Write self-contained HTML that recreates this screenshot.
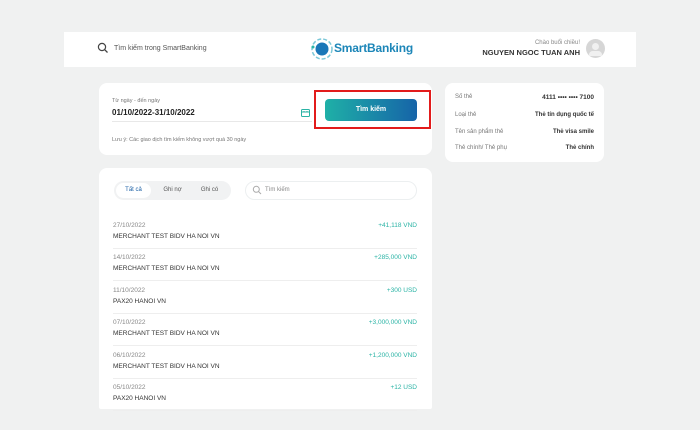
<!DOCTYPE html><html><head><meta charset="utf-8"><style>
*{margin:0;padding:0;box-sizing:border-box}
body{width:700px;height:430px;background:#f0f1f1;font-family:"Liberation Sans",sans-serif;position:relative;overflow:hidden;color:#333}
.abs{position:absolute}
.card{position:absolute;background:#fff;border-radius:8px}
.t7{font-size:7px}
</style></head><body>
<div class="abs" style="left:64px;top:32px;width:572px;height:35px;background:#fff"></div>
<svg class="abs" style="left:97px;top:42px" width="12" height="12" viewBox="0 0 12 12"><circle cx="5" cy="5" r="3.6" fill="none" stroke="#444" stroke-width="1.2"/><path d="M7.6 7.6L10.5 10.5" stroke="#444" stroke-width="1.3"/></svg>
<div class="abs t7" style="left:114px;top:45px;color:#555">Tìm kiếm trong SmartBanking</div>
<svg class="abs" style="left:310px;top:37px" width="24" height="24" viewBox="0 0 24 24"><circle cx="12" cy="12" r="10" fill="none" stroke="#7cc8d8" stroke-width="1.5" stroke-dasharray="4 2"/><circle cx="12" cy="12" r="6.5" fill="#1a77b8"/><circle cx="3" cy="10" r="1.5" fill="#2bb6a8"/></svg>
<div class="abs" style="left:334px;top:41px;font-size:12px;font-weight:bold;color:#1c86b8;letter-spacing:-0.2px">SmartBanking</div>
<div class="abs" style="left:520px;top:40px;font-size:6px;color:#888;width:60px;text-align:right">Chào buổi chiều!</div>
<div class="abs" style="left:470px;top:48px;font-size:7.5px;font-weight:bold;color:#333;width:110px;text-align:right">NGUYEN NGOC TUAN ANH</div>
<div class="abs" style="left:586px;top:39px;width:19px;height:19px;border-radius:50%;background:#d6d6d6"></div>
<div class="abs" style="left:592px;top:43px;width:7px;height:7px;border-radius:50%;background:#f0f0f0"></div>
<div class="abs" style="left:589px;top:51px;width:13px;height:5px;border-radius:6px 6px 2px 2px;background:#f0f0f0"></div>

<div class="card" style="left:99px;top:83px;width:333px;height:72px"></div>
<div class="abs" style="left:112px;top:98px;font-size:5.5px;color:#777">Từ ngày - đến ngày</div>
<div class="abs" style="left:112px;top:108px;font-size:8px;font-weight:bold;color:#222">01/10/2022-31/10/2022</div>
<div class="abs" style="left:112px;top:121px;width:200px;height:1px;background:#e8e8e8"></div>
<svg class="abs" style="left:301px;top:108px" width="9" height="9" viewBox="0 0 9 9"><rect x=".5" y="1.5" width="8" height="7" rx="1" fill="none" stroke="#2ab3a5"/><path d="M.5 4h8M3 3v1M6 3v1" stroke="#2ab3a5"/></svg>
<div class="abs" style="left:112px;top:137px;font-size:5.5px;color:#777">Lưu ý: Các giao dịch tìm kiếm không vượt quá 30 ngày</div>
<div class="abs" style="left:325px;top:99px;width:92px;height:22px;border-radius:4px;background:linear-gradient(90deg,#1fb0a7,#1664a8);color:#fff;font-size:7px;font-weight:bold;text-align:center;line-height:22px">Tìm kiếm</div>
<div class="abs" style="left:314px;top:90px;width:117px;height:39px;border:2.5px solid #e21b1b"></div>

<div class="card" style="left:445px;top:83px;width:159px;height:79px"></div>
<div class="abs" style="left:455px;top:94px;color:#777;font-size:6px">Số thẻ</div>
<div class="abs" style="left:500px;top:94px;width:94px;text-align:right;font-size:6.5px;font-weight:bold">4111 •••• •••• 7100</div>
<div class="abs" style="left:455px;top:112px;color:#777;font-size:6px">Loại thẻ</div>
<div class="abs" style="left:500px;top:112px;width:94px;text-align:right;font-size:6px;font-weight:bold">Thẻ tín dụng quốc tế</div>
<div class="abs" style="left:455px;top:129px;color:#777;font-size:6px">Tên sản phẩm thẻ</div>
<div class="abs" style="left:500px;top:129px;width:94px;text-align:right;font-size:6px;font-weight:bold">Thẻ visa smile</div>
<div class="abs" style="left:455px;top:145px;color:#777;font-size:6px">Thẻ chính/ Thẻ phụ</div>
<div class="abs" style="left:500px;top:145px;width:94px;text-align:right;font-size:6px;font-weight:bold">Thẻ chính</div>

<div class="card" style="left:99px;top:168px;width:333px;height:241px;border-radius:8px 8px 2px 2px"></div>
<div class="abs" style="left:114px;top:181px;width:117px;height:19px;border-radius:10px;background:#f1f2f3"></div>
<div class="abs" style="left:116px;top:183px;width:35px;height:15px;border-radius:8px;background:#fff"></div>
<div class="abs" style="left:116px;top:187px;width:35px;text-align:center;font-size:6px;color:#1a5fa5">Tất cả</div>
<div class="abs" style="left:155px;top:187px;width:35px;text-align:center;font-size:6px;color:#555">Ghi nợ</div>
<div class="abs" style="left:192px;top:187px;width:35px;text-align:center;font-size:6px;color:#555">Ghi có</div>
<div class="abs" style="left:245px;top:181px;width:172px;height:19px;border-radius:10px;border:1px solid #eceff0"></div>
<svg class="abs" style="left:252px;top:185px" width="10" height="10" viewBox="0 0 10 10"><circle cx="4.3" cy="4.3" r="3" fill="none" stroke="#aaa"/><path d="M6.5 6.5L9 9" stroke="#aaa"/></svg>
<div class="abs" style="left:265px;top:187px;font-size:6px;color:#888">Tìm kiếm</div>

<div id="rows"></div>
<script>
var d=[["27/10/2022","MERCHANT TEST BIDV HA NOI VN","+41,118 VND"],["14/10/2022","MERCHANT TEST BIDV HA NOI VN","+285,000 VND"],["11/10/2022","PAX20 HANOI VN","+300 USD"],["07/10/2022","MERCHANT TEST BIDV HA NOI VN","+3,000,000 VND"],["06/10/2022","MERCHANT TEST BIDV HA NOI VN","+1,200,000 VND"],["05/10/2022","PAX20 HANOI VN","+12 USD"]];
var h="";d.forEach(function(r,i){var y=222+i*32.4;
h+='<div class="abs" style="left:113px;top:'+y+'px;font-size:6.5px;color:#888">'+r[0]+'</div>';
h+='<div class="abs" style="left:113px;top:'+(y+11)+'px;font-size:6.5px;color:#333">'+r[1]+'</div>';
h+='<div class="abs" style="left:300px;top:'+y+'px;width:117px;text-align:right;font-size:6.5px;color:#2ab3a5">'+r[2]+'</div>';
h+='<div class="abs" style="left:113px;top:'+(y+26)+'px;width:304px;height:1px;background:#eeeeee"></div>';});
document.getElementById("rows").innerHTML=h;
</script>
</body></html>
